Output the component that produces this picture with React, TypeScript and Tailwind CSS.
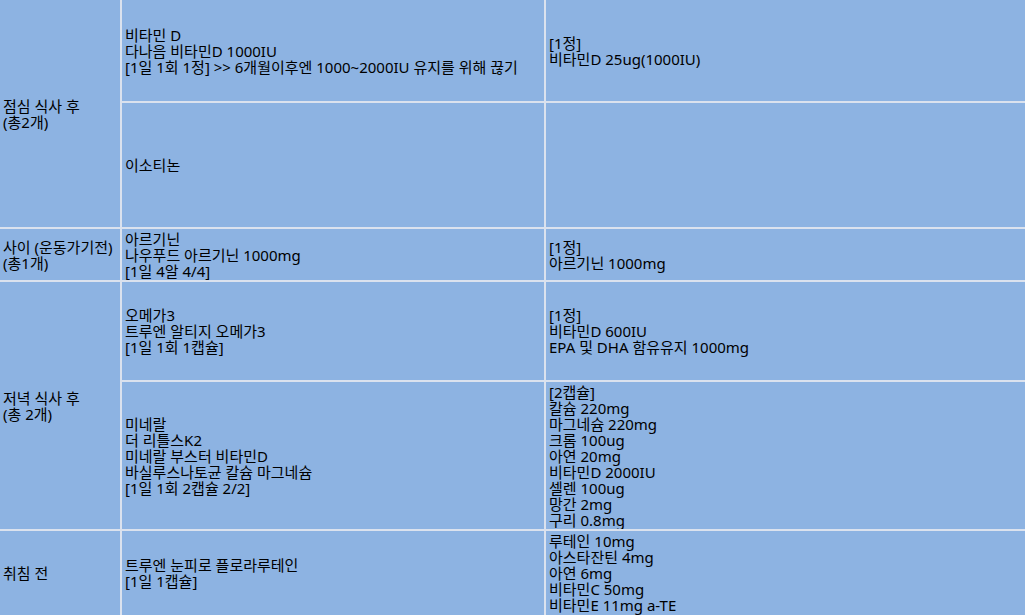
import React from "react";

const Cell = ({ lines, className = "" }: { lines: string[]; className?: string }) => (
  <div className={`bg-[#8db3e2] flex flex-col justify-center pl-[3px] text-[15px] leading-[16px] text-black whitespace-nowrap overflow-hidden ${className}`}>
    {lines.map((l, i) => (
      <div key={i}>{l}</div>
    ))}
  </div>
);

export default function App() {
  return (
    <div
      className="w-[1025px] h-[615px] overflow-hidden bg-[#dbe2ee]"
      style={{ fontFamily: '"Noto Sans", "Noto Sans CJK KR", sans-serif' }}
    >
      <div className="grid grid-cols-[120px_422px_1fr] grid-rows-[101px_124px_51px_98px_147px_90px] gap-[2px]">
        <Cell className="row-span-2" lines={["점심 식사 후", "(총2개)"]} />
        <Cell lines={["비타민 D", "다나음 비타민D 1000IU", "[1일 1회 1정] >> 6개월이후엔 1000~2000IU 유지를 위해 끊기"]} />
        <Cell lines={["[1정]", "비타민D 25ug(1000IU)"]} />
        <Cell lines={["이소티논"]} />
        <Cell lines={[]} />
        <Cell lines={["사이 (운동가기전)", "(총1개)"]} />
        <Cell lines={["아르기닌", "나우푸드 아르기닌 1000mg", "[1일 4알 4/4]"]} />
        <Cell lines={["[1정]", "아르기닌 1000mg"]} />
        <Cell className="row-span-2" lines={["저녁 식사 후", "(총 2개)"]} />
        <Cell lines={["오메가3", "트루엔 알티지 오메가3", "[1일 1회 1캡슐]"]} />
        <Cell lines={["[1정]", "비타민D 600IU", "EPA 및 DHA 함유유지 1000mg"]} />
        <Cell lines={["미네랄", "더 리틀스K2", "미네랄 부스터 비타민D", "바실루스나토균 칼슘 마그네슘", "[1일 1회 2캡슐 2/2]"]} />
        <Cell
          lines={[
            "[2캡슐]",
            "칼슘 220mg",
            "마그네슘 220mg",
            "크롬 100ug",
            "아연 20mg",
            "비타민D 2000IU",
            "셀렌 100ug",
            "망간 2mg",
            "구리 0.8mg",
          ]}
        />
        <Cell lines={["취침 전"]} className="!justify-start pt-[34px]" />
        <Cell lines={["트루엔 눈피로 플로라루테인", "[1일 1캡슐]"]} className="!justify-start pt-[26px]" />
        <Cell
          lines={["루테인 10mg", "아스타잔틴 4mg", "아연 6mg", "비타민C 50mg", "비타민E 11mg a-TE"]}
          className="!justify-start pt-[2px]"
        />
      </div>
    </div>
  );
}
